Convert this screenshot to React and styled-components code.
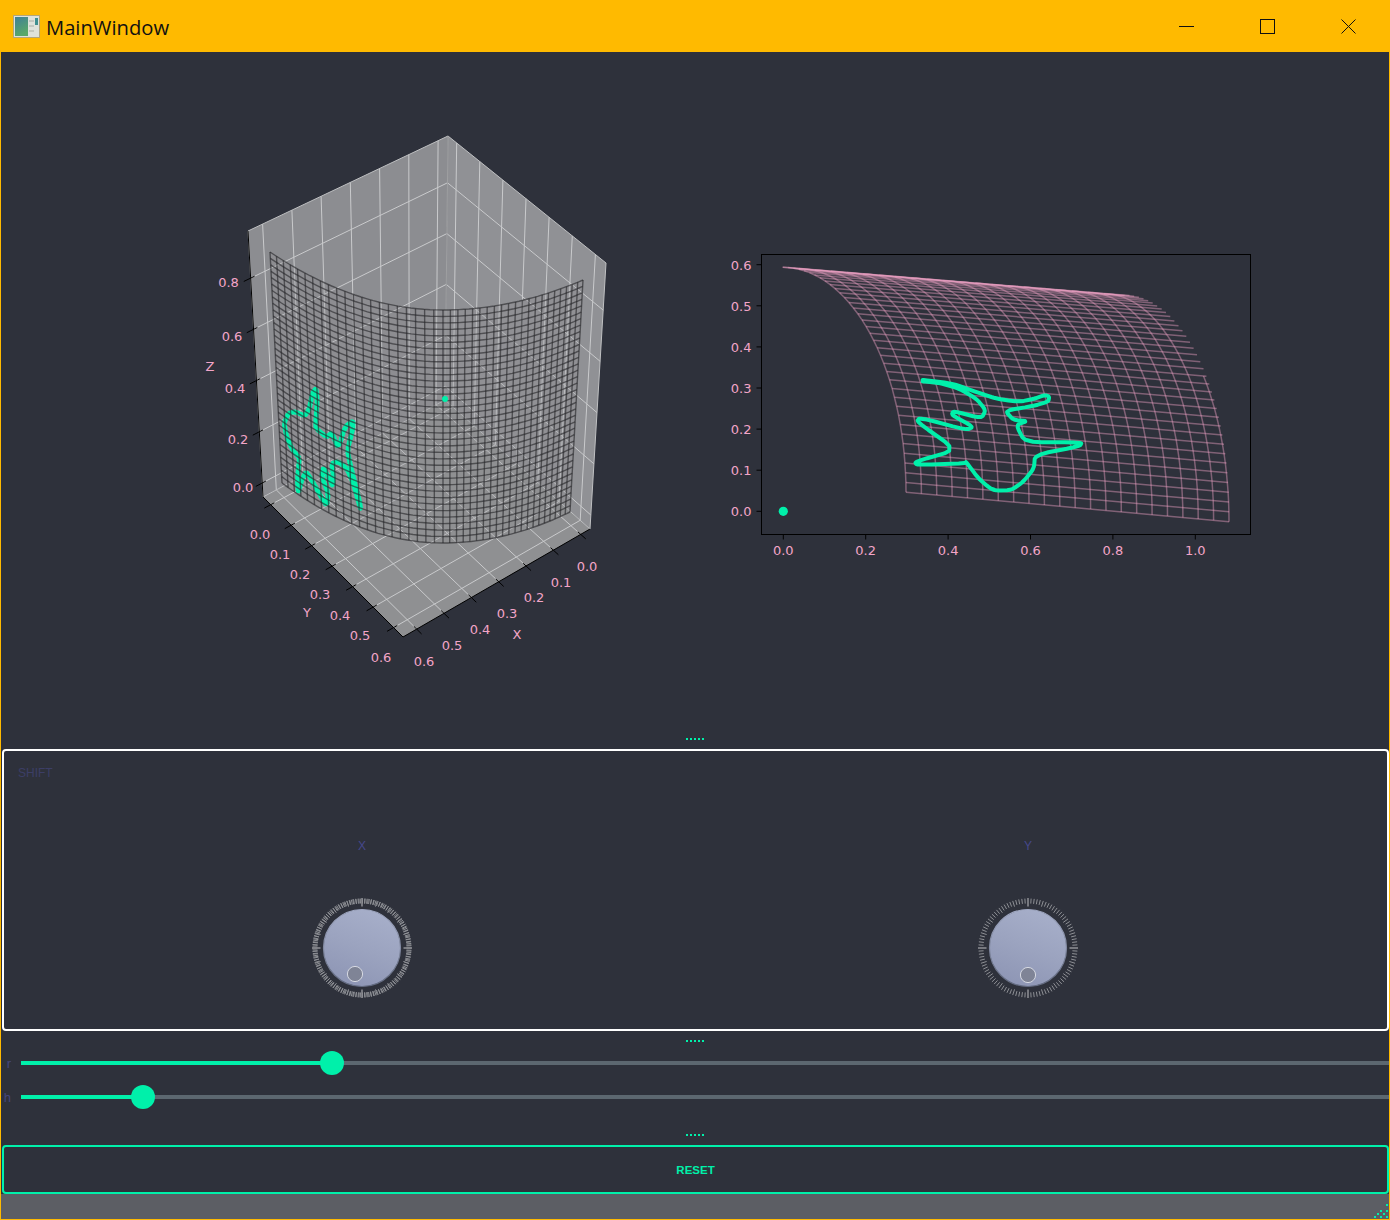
import styled, { createGlobalStyle } from 'styled-components';

const GREEN = '#00f0aa';
const PINK = '#f3a5c8';

const GlobalStyle = createGlobalStyle`
  html, body {
    margin: 0;
    padding: 0;
    background: #2e313b;
  }
`
const Window = styled.div`
  width: 1390px;
  height: 1220px;
  box-sizing: border-box;
  background: #ffba00;
  display: flex;
  flex-direction: column;
  overflow: hidden;
`
const TitleBar = styled.div`
  height: 52px;
  flex: none;
  display: flex;
  align-items: center;
  padding-left: 13px;
  padding-right: 1px;
`
const TitleText = styled.div`
  margin-left: 6px;
  padding-top: 2px;
  font-family: "Open Sans", sans-serif;
  font-size: 20.2px;
  color: #111;
  flex: 1;
`
const WinButton = styled.div`
  width: 81px;
  height: 52px;
  display: flex;
  align-items: center;
  justify-content: center;
`
const Main = styled.div`
  flex: 1;
  margin: 0 1px 1px 1px;
  background: #2e313b;
  display: flex;
  flex-direction: column;
  min-height: 0;
`
const PlotRow = styled.div`
  height: 686px;
  flex: none;
  display: flex;
`
const PlotCanvas = styled.svg`
  width: 694px;
  height: 686px;
  display: block;
`
const TickLabel = styled.text`
  font-family: "DejaVu Sans", sans-serif;
  font-size: 13px;
  fill: ${PINK};
  text-anchor: ${p => p.$anchor || 'middle'};
  dominant-baseline: central;
`
const Handle = styled.div`
  flex: none;
  height: ${p => p.$height}px;
  box-sizing: border-box;
  padding-top: ${p => p.$top}px;
  display: flex;
  justify-content: center;
`
const HandleDots = styled.div`
  width: 18px;
  height: 2px;
  background: repeating-linear-gradient(90deg, ${GREEN} 0 2px, transparent 2px 4px);
`
const ShiftPanel = styled.div`
  flex: none;
  height: 282px;
  margin-left: 1px;
  box-sizing: border-box;
  border: 2px solid #fff;
  border-radius: 4px;
  padding: 15px 26px 0 25px;
  font-family: "Liberation Sans", sans-serif;
`
const PanelTitle = styled.div`
  margin-left: -11px;
  font-size: 12px;
  line-height: 14px;
  color: #3c3e66;
`
const KnobGrid = styled.div`
  margin-top: 59px;
  display: grid;
  grid-template-columns: 1fr 1fr;
`
const KnobColumn = styled.div`
  display: flex;
  flex-direction: column;
  align-items: center;
`
const KnobLabel = styled.div`
  font-size: 12px;
  line-height: 14px;
  color: #46488c;
  margin-bottom: 41px;
`
const SliderRow = styled.div`
  height: 34px;
  flex: none;
  display: flex;
  align-items: center;
  font-family: "Liberation Sans", sans-serif;
`
const SliderLabel = styled.div`
  width: 10px;
  margin-right: 10px;
  text-align: right;
  font-size: 13px;
  color: #44467e;
`
const Track = styled.div`
  flex: 1;
  height: 4px;
  background: #5c6770;
  position: relative;
`
const TrackFill = styled.div`
  height: 100%;
  background: ${GREEN};
`
const Thumb = styled.div`
  position: absolute;
  top: -10px;
  width: 24px;
  height: 24px;
  margin-left: -12px;
  border-radius: 50%;
  background: ${GREEN};
`
const ResetButton = styled.div`
  flex: none;
  height: 49px;
  margin-left: 1px;
  box-sizing: border-box;
  border: 2px solid ${GREEN};
  border-radius: 4px;
  display: flex;
  align-items: center;
  justify-content: center;
  font-family: "Liberation Sans", sans-serif;
  font-weight: 700;
  font-size: 11.5px;
  color: ${GREEN};
`
const StatusBar = styled.div`
  flex: 1;
  background: #5c5e64;
  display: flex;
  justify-content: flex-end;
  align-items: flex-end;
`

const pts = list => list.map(p => `${p[0].toFixed(1)},${p[1].toFixed(1)}`).join(' ')
const range = n => Array.from({ length: n }, (_, i) => i)

// rounds the corners of a hand traced line
function soften(list, rounds = 2, cut = 0.18) {
  let line = list
  for (let r = 0; r < rounds; r++) {
    const next = [line[0]]
    for (let i = 0; i < line.length - 1; i++) {
      const [a, b] = [line[i], line[i + 1]]
      next.push([a[0] + (b[0] - a[0]) * cut, a[1] + (b[1] - a[1]) * cut])
      next.push([b[0] - (b[0] - a[0]) * cut, b[1] - (b[1] - a[1]) * cut])
    }
    next.push(line[line.length - 1])
    line = next
  }
  return line
}

// box corners of the 3d axes, picture coords. index = u,v,w (x, y, z normalised)
const CORNERS = {
  '000': [445, 400], '100': [263, 497], '010': [590, 529], '110': [403, 637],
  '001': [448, 136], '101': [248, 231], '011': [606, 263], '111': [401, 367],
}
const LIM = { x: [-0.034, 0.65], y: [-0.0376, 0.646], z: [-0.0546, 0.984] }
const nx = v => (v - LIM.x[0]) / (LIM.x[1] - LIM.x[0])
const ny = v => (v - LIM.y[0]) / (LIM.y[1] - LIM.y[0])
const nz = v => (v - LIM.z[0]) / (LIM.z[1] - LIM.z[0])

function box(u, v, w) {
  const out = [0, 0]
  for (const a of [0, 1]) for (const b of [0, 1]) for (const c of [0, 1]) {
    const k = (a ? u : 1 - u) * (b ? v : 1 - v) * (c ? w : 1 - w)
    const p = CORNERS[`${a}${b}${c}`]
    out[0] += p[0] * k
    out[1] += p[1] * k
  }
  return out
}

const XY_TICKS = [0, 0.1, 0.2, 0.3, 0.4, 0.5, 0.6]
const Z_TICKS = [0, 0.2, 0.4, 0.6, 0.8]

const PANES = [
  { fill: '#8c8d91', p: ['000', '100', '101', '001'] },
  { fill: '#909195', p: ['000', '010', '011', '001'] },
  { fill: '#8f9092', p: ['000', '100', '110', '010'] },
]

function wallLines() {
  const lines = []
  XY_TICKS.forEach(t => {
    lines.push([box(nx(t), 0, 0), box(nx(t), 0, 1)])
    lines.push([box(0, ny(t), 0), box(0, ny(t), 1)])
    lines.push([box(nx(t), 0, 0), box(nx(t), 1, 0)])
    lines.push([box(0, ny(t), 0), box(1, ny(t), 0)])
  })
  Z_TICKS.forEach(t => {
    lines.push([box(1, 0, nz(t)), box(0, 0, nz(t))])
    lines.push([box(0, 1, nz(t)), box(0, 0, nz(t))])
  })
  return lines
}

// bent sheet in the 3d axes
const SHEET_THETA = 0.8
function sheetPoint(u, t) {
  const n = Math.sin(Math.abs(u) * SHEET_THETA) / Math.sin(SHEET_THETA)
  const left = u < 0
  const top = [443 + (left ? -173 : 140) * n, 310 - (left ? 58 : 30) * n * n]
  const bot = [443 + (left ? -161 : 127) * n, 543 - (left ? 60 : 31) * n * n]
  return [top[0] + (bot[0] - top[0]) * t, top[1] + (bot[1] - top[1]) * t]
}
const SHEET_COLS = 42
const SHEET_ROWS = 36
function sheetLines() {
  const lines = []
  range(SHEET_COLS + 1).forEach(i => {
    const u = -1 + 2 * i / SHEET_COLS
    lines.push(range(9).map(k => sheetPoint(u, k / 8)))
  })
  range(SHEET_ROWS + 1).forEach(j => {
    lines.push(range(61).map(k => sheetPoint(-1 + k / 30, j / SHEET_ROWS)))
  })
  return lines
}
const sheetOutline = () => [
  ...range(61).map(k => sheetPoint(-1 + k / 30, 0)),
  ...range(61).map(k => sheetPoint(1 - k / 30, 1)),
]

const TRACE_3D = [
  [328, 235], [305, 205], [290, 170], [282, 130], [295, 100], [315, 95], [345, 108], [358, 85], [367, 40], [378, 25],
  [382, 60], [377, 125], [378, 145], [410, 172], [425, 158], [445, 205], [465, 140], [490, 122], [488, 150], [472, 210],
  [480, 250], [495, 310], [510, 370], [512, 388], [490, 310], [470, 265], [445, 245], [425, 250], [430, 290], [428, 318],
  [420, 300], [400, 262], [395, 290], [415, 340], [410, 378], [390, 345], [365, 300], [348, 275], [335, 300], [325, 340],
  [322, 300], [328, 235],
].map(p => [p[0] / 3 + 190, p[1] / 3 + 380])

const Z_LABELS = [['0.8', 228.5, 282], ['0.6', 232, 336], ['0.4', 235, 388], ['0.2', 238, 439], ['0.0', 243, 487], ['Z', 210, 366]]
const Y_LABELS = [['0.0', 260, 534], ['0.1', 280, 554], ['0.2', 300, 574], ['0.3', 320, 594], ['0.4', 340, 615], ['0.5', 360, 635], ['0.6', 381, 657], ['Y', 307, 612]]
const X_LABELS = [['0.0', 587, 566], ['0.1', 561, 582], ['0.2', 534, 597], ['0.3', 507, 613], ['0.4', 480, 629], ['0.5', 452, 645], ['0.6', 424, 661], ['X', 517, 634]]

function Plot3D() {
  return (
    <PlotCanvas viewBox="1 52 694 686">
      {PANES.map((pane, i) => (
        <polygon key={i} points={pts(pane.p.map(k => CORNERS[k]))} fill={pane.fill} />
      ))}
      {wallLines().map((l, i) => (
        <polyline key={i} points={pts(l)} fill="none" stroke="#c9cacc" strokeWidth="1" />
      ))}
      <polyline points={pts([CORNERS['100'], CORNERS['101'], CORNERS['001'], CORNERS['011'], CORNERS['010'], CORNERS['000'], CORNERS['100']])} fill="none" stroke="#bfc0c2" strokeWidth="1" />
      <line x1="448" y1="136" x2="445" y2="400" stroke="#a0a1a3" />
      <polygon points={pts(sheetOutline())} fill="#8e8f93" fillOpacity="0.25" />
      <polyline points={pts(soften(TRACE_3D, 1))} fill="none" stroke={GREEN} strokeWidth="4.8" strokeLinejoin="round" />
      {sheetLines().map((l, i) => (
        <polyline key={i} points={pts(l)} fill="none" stroke="rgba(38,38,42,0.62)" strokeWidth="1.4" />
      ))}
      <circle cx="445" cy="399" r="3" fill={GREEN} />
      <polyline points={pts([CORNERS['101'], CORNERS['100'], CORNERS['110'], CORNERS['010']])} fill="none" stroke="#000" strokeWidth="1" />
      {Z_TICKS.map(t => <line key={t} x1={box(1.035, 0, nz(t))[0]} y1={box(1.035, 0, nz(t))[1]} x2={box(0.98, 0, nz(t))[0]} y2={box(0.98, 0, nz(t))[1]} stroke="#000" />)}
      {XY_TICKS.map(t => <line key={t} x1={box(1.035, ny(t), 0)[0]} y1={box(1.035, ny(t), 0)[1]} x2={box(0.98, ny(t), 0)[0]} y2={box(0.98, ny(t), 0)[1]} stroke="#000" />)}
      {XY_TICKS.map(t => <line key={t} x1={box(nx(t), 1.035, 0)[0]} y1={box(nx(t), 1.035, 0)[1]} x2={box(nx(t), 0.98, 0)[0]} y2={box(nx(t), 0.98, 0)[1]} stroke="#000" />)}
      {[...Z_LABELS, ...Y_LABELS, ...X_LABELS].map(([text, x, y]) => (
        <TickLabel key={`${text}${x}`} x={x} y={y}>{text}</TickLabel>
      ))}
    </PlotCanvas>
  )
}

// unrolled mesh of the flat plot: rows bunch up at the top, cols are elliptical arcs
const FLAT_COLS = 21
const FLAT_ROWS = 36
function flatPoint(s, r) {
  const phi = (r / FLAT_ROWS) * Math.PI / 2
  const x0 = 782.7 + (1120 - 782.7) * s
  const y0 = 267.3 + (295 - 267.3) * s
  const w = 123.3 + (109 - 123.3) * s
  const h = 225 + (226.7 - 225) * s
  return [x0 + w * Math.sin(phi), y0 + h * (1 - Math.cos(phi))]
}
function flatLines() {
  const lines = []
  range(FLAT_COLS).forEach(i => {
    lines.push(range(37).map(r => flatPoint(i / FLAT_COLS, r)))
  })
  // the outer col only shows in the lower part, above it the rows just end raggedly
  lines.push(range(17).map(r => flatPoint(1, r + 20)))
  range(FLAT_ROWS + 1).forEach(r => {
    const end = 1 + 0.014 * Math.cos((r / FLAT_ROWS) * Math.PI / 2)
    lines.push([flatPoint(0, r), flatPoint(end, r)])
  })
  return lines
}

const z3 = (x, y) => [x / 3 + 720, y / 3 + 245]
const z4 = (x, y) => [x / 3 + 990, y / 3 + 245]
const TRACE_FLAT = [
  z3(608, 405), z3(700, 416), z3(760, 438), z3(810, 455), z4(40, 465), z4(90, 470), z4(130, 462), z4(165, 450), z4(178, 455), z4(175, 470),
  z4(130, 483), z4(45, 497), z4(70, 525), z4(112, 528), z4(78, 540), z4(105, 592), z4(275, 592), z4(270, 603), z4(135, 630), z4(132, 670),
  z4(100, 710), z4(65, 735), z4(20, 737), z3(810, 730), z3(775, 700), z3(738, 650), z3(738, 655), z3(590, 660), z3(585, 650), z3(710, 615),
  z3(590, 530), z3(600, 518), z3(740, 555), z3(760, 545), z3(695, 510), z3(700, 498), z3(785, 520), z3(797, 495), z3(770, 462), z3(720, 432), z3(660, 414), z3(608, 409),
]

const FLAT_X = [0, 0.2, 0.4, 0.6, 0.8, 1]
const FLAT_Y = [0, 0.1, 0.2, 0.3, 0.4, 0.5, 0.6]

function PlotFlat() {
  const px = v => 783.3 + v * 412
  const py = v => 511.3 - v * 411
  return (
    <PlotCanvas viewBox="695 52 694 686">
      {flatLines().map((l, i) => (
        <polyline key={i} points={pts(l)} fill="none" stroke="rgba(243,165,200,0.42)" strokeWidth="1.5" />
      ))}
      <polyline points={pts(soften(TRACE_FLAT))} fill="none" stroke={GREEN} strokeWidth="4" strokeLinejoin="round" strokeLinecap="round" />
      <circle cx="783.3" cy="511.3" r="4.6" fill={GREEN} />
      <rect x="761.5" y="254.5" width="489" height="280" fill="none" stroke="#000" strokeWidth="1" />
      {FLAT_X.map(v => (
        <g key={v}>
          <line x1={px(v)} y1="534.5" x2={px(v)} y2="539.5" stroke="#000" />
          <TickLabel x={px(v)} y="550">{v.toFixed(1)}</TickLabel>
        </g>
      ))}
      {FLAT_Y.map(v => (
        <g key={v}>
          <line x1="756.5" y1={py(v)} x2="761.5" y2={py(v)} stroke="#000" />
          <TickLabel $anchor="end" x="751.5" y={py(v) + 0.5}>{v.toFixed(1)}</TickLabel>
        </g>
      ))}
    </PlotCanvas>
  )
}

function Knob({ id, notches, dot }) {
  const marks = []
  notches.forEach(n => {
    range(n).forEach(i => {
      const a = (i / n) * Math.PI * 2
      const major = n === 100 && i % 25 === 0
      const mid = n === 100 && i % 5 === 0
      const r0 = major ? 41.5 : mid ? 43.5 : 44.5
      const r1 = major ? 50 : 49.5
      marks.push(
        <line key={`${n}-${i}`} x1={Math.cos(a) * r0} y1={Math.sin(a) * r0} x2={Math.cos(a) * r1} y2={Math.sin(a) * r1}
          stroke={major ? '#c0c1c4' : '#8e9095'} strokeWidth="1" />
      )
    })
  })
  return (
    <svg width="108" height="108" viewBox="-54 -54 108 108">
      <defs>
        <linearGradient id={`${id}-face`} x1="0.72" y1="0.05" x2="0.35" y2="1">
          <stop offset="0" stopColor="#a6aec9" />
          <stop offset="0.5" stopColor="#9ba3bf" />
          <stop offset="1" stopColor="#8e96b5" />
        </linearGradient>
        <linearGradient id={`${id}-rim`} x1="0.5" y1="0" x2="0.5" y2="1">
          <stop offset="0" stopColor="#a0a8c2" />
          <stop offset="1" stopColor="#626a80" />
        </linearGradient>
      </defs>
      {marks}
      <circle r="38.5" fill={`url(#${id}-face)`} stroke={`url(#${id}-rim)`} strokeWidth="1.2" />
      <circle cx={dot[0]} cy={dot[1]} r="7.6" fill="#7f8496" stroke="#d6d9e2" strokeWidth="1" />
    </svg>
  )
}

function AppIcon() {
  return (
    <svg width="27" height="23" viewBox="0 0 27 23">
      <defs>
        <linearGradient id="app-icon-pane" x1="0" y1="0" x2="0.4" y2="1">
          <stop offset="0" stopColor="#3f7f98" />
          <stop offset="1" stopColor="#5aa868" />
        </linearGradient>
      </defs>
      <rect x="0.5" y="0.5" width="26" height="22" fill="#dfe2dc" stroke="#b4a67a" />
      <rect x="2" y="2" width="13" height="19" fill="url(#app-icon-pane)" />
      <rect x="22" y="3" width="3" height="7" fill="#3f8f90" />
      <rect x="16" y="5" width="5" height="2" fill="#c4c8c1" />
      <rect x="16" y="10" width="5" height="2" fill="#c4c8c1" />
      <rect x="16" y="15" width="5" height="2" fill="#c4c8c1" />
    </svg>
  )
}

const GRIP = [[13, 1], [7, 7], [13, 7], [4, 10], [10, 10], [1, 13], [7, 13], [13, 13]]

function SizeGrip() {
  return (
    <svg width="16" height="16" viewBox="0 0 16 16">
      {GRIP.map(([x, y]) => <rect key={`${x}-${y}`} x={x} y={y} width="2" height="2" fill={GREEN} />)}
    </svg>
  )
}

function Slider({ label, value }) {
  return (
    <SliderRow>
      <SliderLabel>{label}</SliderLabel>
      <Track>
        <TrackFill style={{ width: `${value}%` }} />
        <Thumb style={{ left: `${value}%` }} />
      </Track>
    </SliderRow>
  )
}

function App() {
  return (
    <>
      <GlobalStyle />
      <Window>
        <TitleBar>
          <AppIcon />
          <TitleText>MainWindow</TitleText>
          <WinButton>
            <svg width="15" height="15" viewBox="0 0 15 15"><line x1="0" y1="7.5" x2="15" y2="7.5" stroke="#111" /></svg>
          </WinButton>
          <WinButton>
            <svg width="15" height="15" viewBox="0 0 15 15"><rect x="0.5" y="0.5" width="14" height="14" fill="none" stroke="#111" /></svg>
          </WinButton>
          <WinButton>
            <svg width="15" height="15" viewBox="0 0 15 15"><path d="M0.5 0.5 L14.5 14.5 M14.5 0.5 L0.5 14.5" stroke="#111" fill="none" /></svg>
          </WinButton>
        </TitleBar>
        <Main>
          <PlotRow>
            <Plot3D />
            <PlotFlat />
          </PlotRow>
          <Handle $height={11} $top={0}><HandleDots /></Handle>
          <ShiftPanel>
            <PanelTitle>SHIFT</PanelTitle>
            <KnobGrid>
              <KnobColumn>
                <KnobLabel>X</KnobLabel>
                <Knob id="knob-x" notches={[100, 137]} dot={[-7, 26]} />
              </KnobColumn>
              <KnobColumn>
                <KnobLabel>Y</KnobLabel>
                <Knob id="knob-y" notches={[100]} dot={[0, 27]} />
              </KnobColumn>
            </KnobGrid>
          </ShiftPanel>
          <Handle $height={15} $top={9}><HandleDots /></Handle>
          <Slider label="r" value={22.73} />
          <Slider label="h" value={8.95} />
          <Handle $height={31} $top={20}><HandleDots /></Handle>
          <ResetButton>RESET</ResetButton>
          <StatusBar><SizeGrip /></StatusBar>
        </Main>
      </Window>
    </>
  )
}

export default App
